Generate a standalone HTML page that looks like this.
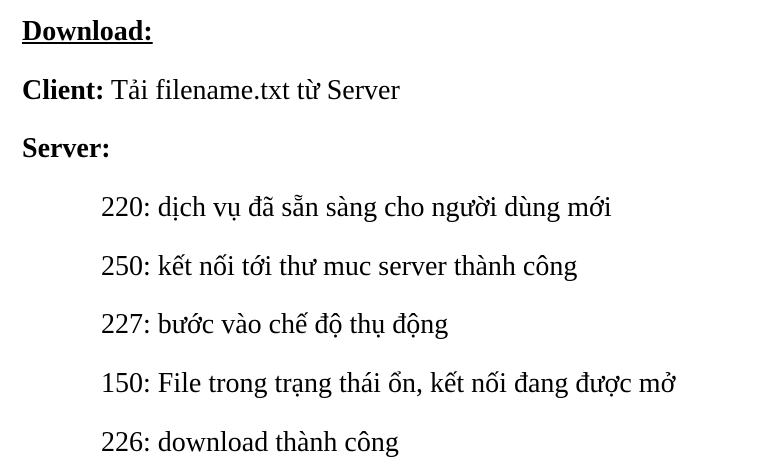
<!DOCTYPE html>
<html><head><meta charset="utf-8"><style>
body{margin:0;width:777px;height:469px;background:#fff;position:relative;overflow:hidden;font-family:"Liberation Serif",serif;font-size:28px;color:#000}
div{position:absolute;line-height:28px;white-space:nowrap}
b{font-weight:bold}
</style></head><body>
<div style="left:22px;top:18px"><b><u>Download:</u></b></div>
<div style="left:22px;top:77px"><b>Client:</b> Tải filename.txt từ Server</div>
<div style="left:22px;top:135px"><b>Server:</b></div>
<div style="left:101px;top:194px">220: dịch vụ đã sẵn sàng cho người dùng mới</div>
<div style="left:101px;top:253px">250: kết nối tới thư muc server thành công</div>
<div style="left:101px;top:311px">227: bước vào chế độ thụ động</div>
<div style="left:101px;top:370px">150: File trong trạng thái ổn, kết nối đang được mở</div>
<div style="left:101px;top:429px">226: download thành công</div>
</body></html>
